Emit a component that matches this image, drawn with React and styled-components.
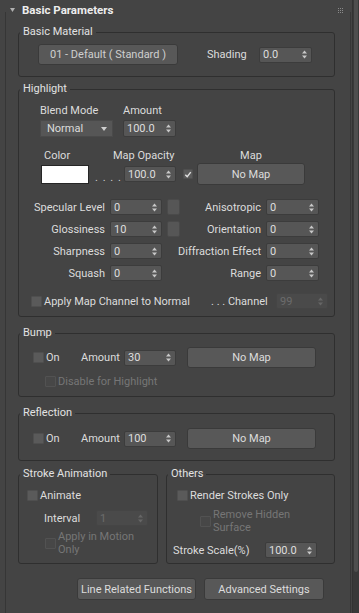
import React from "react";
import styled, { createGlobalStyle } from "styled-components";

const GlobalStyle = createGlobalStyle`
  html, body {
    margin: 0;
    padding: 0;
    background: #444444;
  }
  body {
    font-family: Roboto, "Liberation Sans", Arial, sans-serif;
    font-size: 11px;
    color: #dcdcdc;
  }
  * {
    box-sizing: border-box;
  }
`;

const Page = styled.div`
  display: flex;
  width: 359px;
  height: 613px;
  overflow: hidden;
  background: #444444;
`;

const Rollout = styled.div`
  width: 352px;
  display: flex;
  flex-direction: column;
`;

const Header = styled.div`
  height: 20px;
  display: flex;
  align-items: center;
  padding-left: 10px;
  position: relative;
  z-index: 1;
`;

const Title = styled.span`
  margin-left: 7px;
  font-weight: 700;
  font-size: 11.5px;
  color: #ededed;
`;

const Grip = styled.svg`
  margin-left: auto;
  margin-right: 9px;
`;

const Body = styled.div`
  flex: 1;
  margin: -8px 1px 0 5px;
  padding: 13px 0 0 12px;
  border-left: 1px solid #363636;
  border-right: 1px solid #363636;
`;

const Scrollbar = styled.div`
  width: 7px;
  padding: 0 1px;
  background: #393939;
  border-left: 1px solid #333;
`;

const Thumb = styled.div`
  height: 572px;
  background: #4e4e4e;
  border-radius: 0 0 3px 3px;
`;

const Group = styled.fieldset`
  margin: ${(p) => p.$mt || 0}px 0 0;
  padding: 0 0 ${(p) => p.$pb || 0}px;
  width: ${(p) => p.$w || 317}px;
  min-width: 0;
  border: 1px solid #2f2f2f;
  border-radius: 3px;
  display: flex;
  flex-direction: column;
`;

const Legend = styled.legend`
  padding: 0 3px;
  margin-left: 1px;
  height: 14px;
  line-height: 14px;
  color: #e2e2e2;
`;

const Row = styled.div`
  display: flex;
  align-items: center;
  height: ${(p) => p.$h || 16}px;
  margin-top: ${(p) => p.$mt || 0}px;
  padding-left: ${(p) => p.$pl || 0}px;
`;

const Label = styled.span`
  flex: none;
  width: ${(p) => (p.$w ? `${p.$w}px` : "auto")};
  margin-left: ${(p) => p.$ml || 0}px;
  text-align: ${(p) => p.$align || "left"};
  white-space: nowrap;
  line-height: 13px;
  color: ${(p) => (p.$disabled ? "#767676" : "#dcdcdc")};
`;

const SpinBox = styled.div`
  flex: none;
  width: ${(p) => p.$w || 52}px;
  height: ${(p) => p.$h || 16}px;
  margin-left: ${(p) => p.$ml || 0}px;
  display: flex;
  align-items: center;
  justify-content: space-between;
  padding: 0 4px 0 3px;
  background: ${(p) => (p.$disabled ? "#4a4a4a" : "#565656")};
  border: 1px solid ${(p) => (p.$disabled ? "#454545" : "#3c3c3c")};
  border-radius: 2px;
  color: ${(p) => (p.$disabled ? "#6c6c6c" : "#dedede")};
`;

const Button = styled.button`
  flex: none;
  width: ${(p) => p.$w}px;
  height: ${(p) => p.$h || 22}px;
  margin-left: ${(p) => p.$ml || 0}px;
  padding: 0;
  font: inherit;
  color: ${(p) => p.$color || "#dcdcdc"};
  background: #585858;
  border: 1px solid #3a3a3a;
  border-radius: 3px;
`;

const Dropdown = styled.div`
  flex: none;
  width: 73px;
  height: 17px;
  display: flex;
  align-items: center;
  justify-content: space-between;
  padding: 0 5px 0 6px;
  background: #565656;
  border: 1px solid #4a4a4a;
  color: #dcdcdc;
`;

const Check = styled.span`
  flex: none;
  width: 11px;
  height: 11px;
  margin-right: 2px;
  display: inline-flex;
  align-items: center;
  justify-content: center;
  background: ${(p) => (p.$disabled ? "#474747" : "#5a5a5a")};
  border: 1px solid ${(p) => (p.$disabled ? "#525252" : "#4f4f4f")};
  border-radius: 1px;
`;

const Swatch = styled.div`
  flex: none;
  width: 48px;
  height: 19px;
  background: #ffffff;
  border: 1px solid #262626;
`;

const Dots = styled.span`
  flex: none;
  width: 29px;
  margin-left: 6px;
  align-self: flex-end;
  margin-bottom: 1px;
  letter-spacing: 1px;
  color: #d0d0d0;
`;

const ParamGrid = styled.div`
  display: grid;
  grid-template-columns: 86px 52px 13px 76px 53px;
  grid-auto-rows: 16px;
  column-gap: 5px;
  row-gap: 6px;
  margin-top: 14px;
`;

const GridLabel = styled.span`
  display: flex;
  align-items: center;
  justify-content: flex-end;
  white-space: nowrap;
`;

const MapSlot = styled.div`
  background: #565656;
  border: 1px solid #4a4a4a;
  border-radius: 2px;
`;

const Split = styled.div`
  display: flex;
  gap: 8px;
  margin-top: 6px;
  align-items: stretch;
`;

const TwoLine = styled.span`
  line-height: 13px;
  color: #767676;
  white-space: nowrap;
`;

const Footer = styled.div`
  width: 317px;
  display: flex;
  justify-content: flex-end;
  gap: 8px;
  margin-top: 14px;
  padding-right: 11px;
`;

function Arrows({ disabled }) {
  const c = disabled ? "#666" : "#c8c8c8";
  return (
    <svg width="5" height="9" viewBox="0 0 5 9">
      <polygon points="0,3.5 2.5,0.5 5,3.5" fill={c} />
      <polygon points="0,5.5 5,5.5 2.5,8.5" fill={c} />
    </svg>
  );
}

function Spinner({ value, w, h, ml, disabled }) {
  return (
    <SpinBox $w={w} $h={h} $ml={ml} $disabled={disabled}>
      <span>{value}</span>
      <Arrows disabled={disabled} />
    </SpinBox>
  );
}

function CheckMark() {
  return (
    <svg width="9" height="9" viewBox="0 0 9 9">
      <path d="M1.5 4.8 L3.6 7 L7.6 1.8" stroke="#e0e0e0" strokeWidth="1.6" fill="none" />
    </svg>
  );
}

const params = [
  ["Specular Level", "0", true, "Anisotropic", "0"],
  ["Glossiness", "10", true, "Orientation", "0"],
  ["Sharpness", "0", false, "Diffraction Effect", "0"],
  ["Squash", "0", false, "Range", "0"],
];

export default function App() {
  return (
    <Page>
      <GlobalStyle />
      <Rollout>
        <Header>
          <svg width="5" height="4" viewBox="0 0 5 4">
            <polygon points="0,0 5,0 2.5,4" fill="#b0b0b0" />
          </svg>
          <Title>Basic Parameters</Title>
          <Grip width="5" height="5" viewBox="0 0 5 5">
            {[0, 2, 4].map((y) =>
              [0, 2, 4].map((x) => <rect key={`${x}-${y}`} x={x} y={y} width="1" height="1" fill="#8a8a8a" />)
            )}
          </Grip>
        </Header>
        <Body>
          <Group $pb={11}>
            <Legend>Basic Material</Legend>
            <Row $h={21} $mt={5} $pl={19}>
              <Button $w={140} $h={21} $color="#cfcfcf">01 - Default ( Standard )</Button>
              <Label $w={52} $ml={29}>Shading</Label>
              <Spinner value="0.0" w={53} />
            </Row>
          </Group>

          <Group $mt={5} $pb={7}>
            <Legend>Highlight</Legend>
            <Row $h={14} $mt={7} $pl={21}>
              <Label $w={83}>Blend Mode</Label>
              <Label>Amount</Label>
            </Row>
            <Row $h={17} $mt={3} $pl={21}>
              <Dropdown>
                <span>Normal</span>
                <svg width="6" height="4" viewBox="0 0 6 4">
                  <polygon points="0,0 6,0 3,4" fill="#cfcfcf" />
                </svg>
              </Dropdown>
              <Spinner value="100.0" w={53} h={17} ml={10} />
            </Row>
            <Row $h={14} $mt={11} $pl={25}>
              <Label $w={69}>Color</Label>
              <Label $w={84}>Map Opacity</Label>
              <Label $w={108} $align="center">Map</Label>
            </Row>
            <Row $h={22} $mt={1} $pl={22}>
              <Swatch />
              <Dots>. . . .</Dots>
              <Spinner value="100.0" w={52} />
              <Check style={{ marginLeft: 7, marginRight: 4, width: 10, height: 10 }}>
                <CheckMark />
              </Check>
              <Button $w={108} $h={22}>No Map</Button>
            </Row>
            <ParamGrid>
              {params.map(([l1, v1, slot, l2, v2]) => (
                <React.Fragment key={l1}>
                  <GridLabel>{l1}</GridLabel>
                  <Spinner value={v1} />
                  {slot ? <MapSlot /> : <span />}
                  <GridLabel>{l2}</GridLabel>
                  <Spinner value={v2} w={53} />
                </React.Fragment>
              ))}
            </ParamGrid>
            <Row $h={16} $mt={12} $pl={12}>
              <Check />
              <Label $w={167}>Apply Map Channel to Normal</Label>
              <Label $w={65}>. . . Channel</Label>
              <Spinner value="99" disabled />
            </Row>
          </Group>

          <Group $mt={9} $pb={8}>
            <Legend>Bump</Legend>
            <Row $h={21} $mt={7} $pl={14}>
              <Check />
              <Label $w={35}>On</Label>
              <Label $w={43}>Amount</Label>
              <Spinner value="30" />
              <Button $w={129} $h={21} $ml={11}>No Map</Button>
            </Row>
            <Row $h={14} $mt={6} $pl={26}>
              <Check $disabled />
              <Label $disabled>Disable for Highlight</Label>
            </Row>
          </Group>

          <Group $mt={9} $pb={11}>
            <Legend>Reflection</Legend>
            <Row $h={21} $mt={8} $pl={14}>
              <Check />
              <Label $w={35}>On</Label>
              <Label $w={43}>Amount</Label>
              <Spinner value="100" />
              <Button $w={129} $h={21} $ml={11}>No Map</Button>
            </Row>
          </Group>

          <Split>
            <Group $w={140} $pb={7}>
              <Legend>Stroke Animation</Legend>
              <Row $h={14} $mt={7} $pl={8}>
                <Check />
                <Label>Animate</Label>
              </Row>
              <Row $h={16} $mt={8} $pl={25}>
                <Label $w={52}>Interval</Label>
                <Spinner value="1" disabled />
              </Row>
              <Row $h={26} $mt={4} $pl={26}>
                <Check $disabled />
                <TwoLine>
                  Apply in Motion
                  <br />
                  Only
                </TwoLine>
              </Row>
            </Group>
            <Group $w={169} $pb={5}>
              <Legend>Others</Legend>
              <Row $h={14} $mt={7} $pl={10}>
                <Check />
                <Label>Render Strokes Only</Label>
              </Row>
              <Row $h={26} $mt={6} $pl={33}>
                <Check $disabled />
                <TwoLine>
                  Remove Hidden
                  <br />
                  Surface
                </TwoLine>
              </Row>
              <Row $h={16} $mt={8} $pl={6}>
                <Label $w={92}>Stroke Scale(%)</Label>
                <Spinner value="100.0" />
              </Row>
            </Group>
          </Split>

          <Footer>
            <Button $w={119} $h={22}>Line Related Functions</Button>
            <Button $w={120} $h={22}>Advanced Settings</Button>
          </Footer>
        </Body>
      </Rollout>
      <Scrollbar>
        <Thumb />
      </Scrollbar>
    </Page>
  );
}
